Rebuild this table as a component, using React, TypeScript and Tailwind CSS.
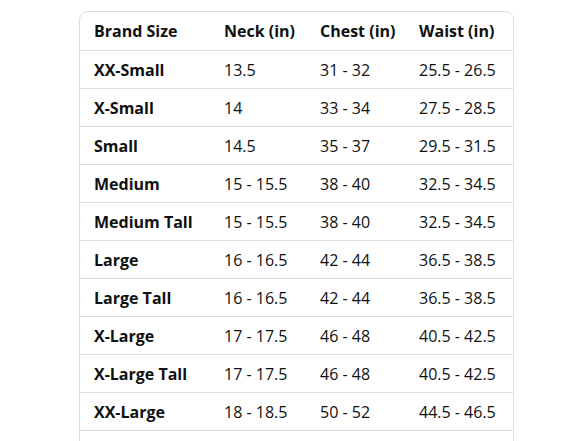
const rows = [
  ["XX-Small", "13.5", "31 - 32", "25.5 - 26.5"],
  ["X-Small", "14", "33 - 34", "27.5 - 28.5"],
  ["Small", "14.5", "35 - 37", "29.5 - 31.5"],
  ["Medium", "15 - 15.5", "38 - 40", "32.5 - 34.5"],
  ["Medium Tall", "15 - 15.5", "38 - 40", "32.5 - 34.5"],
  ["Large", "16 - 16.5", "42 - 44", "36.5 - 38.5"],
  ["Large Tall", "16 - 16.5", "42 - 44", "36.5 - 38.5"],
  ["X-Large", "17 - 17.5", "46 - 48", "40.5 - 42.5"],
  ["X-Large Tall", "17 - 17.5", "46 - 48", "40.5 - 42.5"],
  ["XX-Large", "18 - 18.5", "50 - 52", "44.5 - 46.5"],
];

const cols = "grid grid-cols-[130px_96px_99px_108px]";

export default function App() {
  return (
    <div className="h-[441px] overflow-hidden bg-white pt-[11px] font-['Open_Sans',sans-serif] text-[16px] text-[#0f1111]">
      <div className="ml-[79px] w-[435px] rounded-t-[9px] border border-[#dedede]">
        <div className={`${cols} h-[38px] items-center font-bold`}>
          <div className="pl-[14px]">Brand Size</div>
          <div className="pl-[14px]">Neck (in)</div>
          <div className="pl-[14px]">Chest (in)</div>
          <div className="pl-[14px]">Waist (in)</div>
        </div>
        {rows.map((r) => (
          <div key={r[0]} className={`${cols} h-[38px] items-center border-t border-[#dedede]`}>
            <div className="pl-[14px] font-bold">{r[0]}</div>
            <div className="pl-[14px]">{r[1]}</div>
            <div className="pl-[14px]">{r[2]}</div>
            <div className="pl-[14px]">{r[3]}</div>
          </div>
        ))}
        {/* next row, cut off by the bottom edge */}
        <div className={`${cols} h-[38px] border-t border-[#dedede]`} />
      </div>
    </div>
  );
}
